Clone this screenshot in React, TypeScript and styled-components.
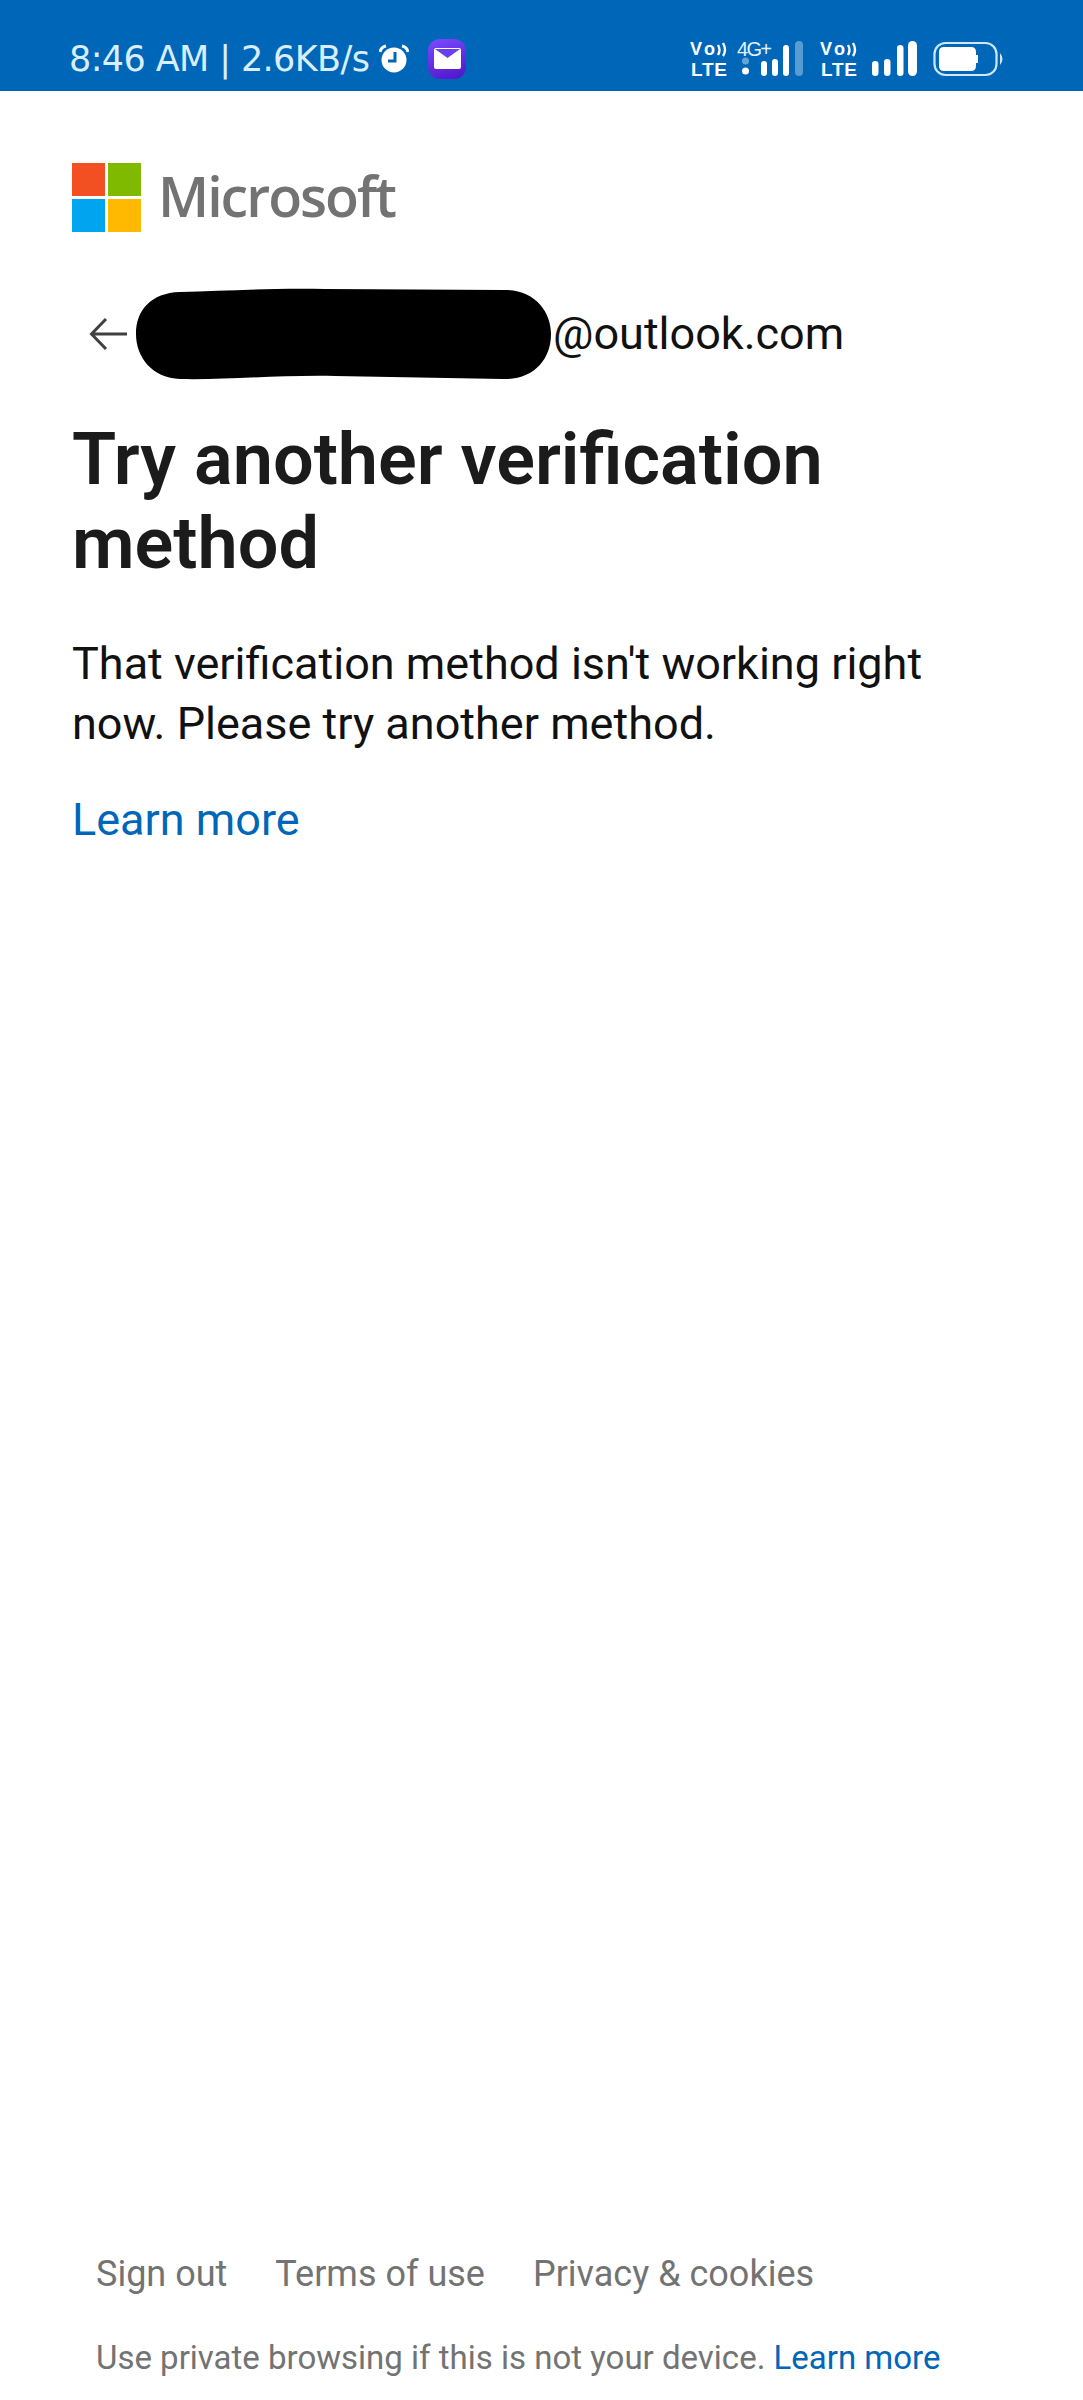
import styled, { createGlobalStyle } from "styled-components";

const GlobalStyle = createGlobalStyle`
  html, body {
    margin: 0;
    padding: 0;
    background: #fff;
  }
`;

const Page = styled.div`
  display: flex;
  flex-direction: column;
  width: 1083px;
  height: 2400px;
  overflow: hidden;
  font-family: Roboto, "Liberation Sans", sans-serif;
  color: #1b1b1b;
`;

const StatusBar = styled.div`
  display: flex;
  justify-content: space-between;
  align-items: center;
  height: 91px;
  padding: 26px 78px 0 69px;
  box-sizing: border-box;
  background: #0067b8;
  flex-shrink: 0;
`;

const StatusLeft = styled.div`
  display: flex;
  align-items: center;
`;

const StatusRight = styled.div`
  display: flex;
  align-items: center;
`;

const StatusIcon = styled.svg<{ $left?: number }>`
  margin-left: ${(p) => p.$left ?? 0}px;
  flex-shrink: 0;
`;

const StatusText = styled.span`
  font-family: "DejaVu Sans", sans-serif;
  font-size: 35px;
  line-height: 42px;
  color: #d9eeff;
  letter-spacing: -0.6px;
  white-space: nowrap;
  width: 310px;
`;

const AppBadge = styled.div`
  display: flex;
  align-items: center;
  justify-content: center;
  width: 38px;
  height: 40px;
  margin-left: 19px;
  border-radius: 12px;
  background: linear-gradient(160deg, #7a4cff, #4e14c8);
`;

const Main = styled.main`
  display: flex;
  flex-direction: column;
  padding: 72px 72px 0;
`;

const Brand = styled.div`
  display: flex;
  align-items: center;
  gap: 17px;
  height: 69px;
`;

const LogoGrid = styled.div`
  display: grid;
  grid-template-columns: 33px 33px;
  grid-template-rows: 33px 33px;
  gap: 3px;
`;

const LogoTile = styled.div<{ $color: string }>`
  background: ${(p) => p.$color};
`;

const BrandName = styled.span`
  font-family: "Open Sans", sans-serif;
  font-size: 55.5px;
  font-weight: 600;
  letter-spacing: -2px;
  line-height: 65px;
  padding-bottom: 4px;
  color: #737373;
`;

const Identity = styled.div`
  display: flex;
  align-items: center;
  height: 92px;
  margin-top: 56px;
  padding-left: 17px;
`;

const BackIcon = styled.svg`
  width: 40px;
  height: 34px;
  margin-right: 7px;
  flex-shrink: 0;
`;

const Redaction = styled.svg`
  width: 417px;
  height: 92px;
  flex-shrink: 0;
  margin-left: -1px;
`;

const Email = styled.span`
  font-size: 45px;
  line-height: 60px;
  margin-left: 1px;
  color: #111;
`;

const Title = styled.h1`
  margin: 38px 0 0;
  font-size: 72px;
  line-height: 84px;
  font-weight: 600;
  color: #1b1b1b;
  width: 880px;
`;

const Message = styled.p`
  margin: 48px 0 0;
  font-size: 45px;
  line-height: 60px;
  width: 920px;
  color: #111;
`;

const MoreLink = styled.a`
  display: block;
  margin-top: 36px;
  font-size: 45px;
  line-height: 60px;
  color: #0067b8;
`;

const Footer = styled.footer`
  display: flex;
  flex-direction: column;
  margin-top: auto;
  padding: 0 0 20px 96px;
`;

const FooterLinks = styled.div`
  display: flex;
  gap: 48px;
`;

const FooterLink = styled.span`
  font-size: 36px;
  line-height: 50px;
  color: #737373;
`;

const Notice = styled.div`
  margin-top: 37px;
  font-size: 33px;
  line-height: 44px;
  color: #737373;
  white-space: nowrap;
`;

const NoticeLink = styled.span`
  color: #0067b8;
`;

const VoLte = ({ left }: { left?: number }) => (
  <StatusIcon $left={left} width="38" height="42" viewBox="0 0 38 42">
    <text x="0" y="17" fontFamily="Liberation Sans" fontWeight="700" fontSize="18" textLength="25" fill="#fff">Vo</text>
    <path d="M28 7q3 5 0 10M33 5q4 7 0 13" stroke="#fff" strokeWidth="2.4" fill="none" />
    <text x="1" y="38" fontFamily="Liberation Sans" fontWeight="700" fontSize="19" textLength="36" fill="#fff">LTE</text>
  </StatusIcon>
);

const App = () => {
  return (
    <>
      <GlobalStyle />
      <Page>
        <StatusBar>
          <StatusLeft>
            <StatusText>8:46 AM | 2.6KB/s</StatusText>
            <StatusIcon width="30" height="30" viewBox="0 0 30 30">
              <circle cx="15" cy="16" r="12.5" fill="#fff" />
              <path d="M16 8v9h-7" stroke="#0067b8" strokeWidth="3" fill="none" />
              <path d="M1 8q1-5 6-6M29 8q-1-5-6-6" stroke="#fff" strokeWidth="3" fill="none" />
            </StatusIcon>
            <AppBadge>
              <svg width="27" height="21" viewBox="0 0 27 21">
                <rect width="27" height="21" rx="2" fill="#fff" />
                <path d="M1 1h25l-12.5 9z" fill="#6a3df0" />
              </svg>
            </AppBadge>
          </StatusLeft>
          <StatusRight>
            <VoLte />
            <StatusIcon $left={9} width="67" height="42" viewBox="0 0 67 42">
              <text x="0" y="18" fontFamily="Liberation Sans" fontSize="20" textLength="35" fill="#e6f2fc">4G+</text>
              <circle cx="8.5" cy="23" r="3.5" fill="#fff" opacity="0.4" />
              <circle cx="8.5" cy="33" r="3.5" fill="#fff" />
              <rect x="24" y="23" width="6" height="15" rx="3" fill="#fff" />
              <rect x="35" y="21" width="6" height="17" rx="3" fill="#fff" />
              <rect x="46" y="7" width="6" height="31" rx="3" fill="#fff" />
              <rect x="58" y="3" width="8" height="35" rx="4" fill="#fff" opacity="0.35" />
            </StatusIcon>
            <VoLte left={16} />
            <StatusIcon $left={14} width="46" height="42" viewBox="0 0 46 42">
              <rect x="0" y="23" width="6.5" height="15" rx="3.2" fill="#fff" />
              <rect x="12" y="21" width="6.5" height="17" rx="3.2" fill="#fff" />
              <rect x="25" y="7" width="6.5" height="31" rx="3.2" fill="#fff" />
              <rect x="36" y="3" width="9" height="35" rx="4.5" fill="#fff" />
            </StatusIcon>
            <StatusIcon $left={15} width="72" height="36" viewBox="0 0 72 36">
              <rect x="1.5" y="2" width="62" height="32" rx="11" fill="none" stroke="#cfe6fb" strokeWidth="2.2" />
              <path d="M11 6h27q5 0 5 5v3h2v8h-2v3q0 5-5 5H11q-5 0-5-5V11q0-5 5-5z" fill="#fff" />
              <path d="M67 12q5 6 0 12z" fill="#cfe6fb" />
            </StatusIcon>
          </StatusRight>
        </StatusBar>
        <Main>
          <Brand>
            <LogoGrid>
              <LogoTile $color="#f25022" />
              <LogoTile $color="#7fba00" />
              <LogoTile $color="#00a4ef" />
              <LogoTile $color="#ffb900" />
            </LogoGrid>
            <BrandName>Microsoft</BrandName>
          </Brand>
          <Identity>
            <BackIcon viewBox="0 0 40 34">
              <path d="M38 17H3M17 2 2.5 17 17 32" fill="none" stroke="#404040" strokeWidth="3" />
            </BackIcon>
            <Redaction viewBox="0 0 417 92">
              <path
                d="M45 4 C90 3 130 0 190 1 L370 2 C400 2 416 24 416 46 C416 72 398 92 368 91 L200 88 C140 87 90 92 45 91 C18 90 1 70 1 46 C1 22 16 5 45 4 Z"
                fill="#000"
              />
            </Redaction>
            <Email>@outlook.com</Email>
          </Identity>
          <Title>Try another verification method</Title>
          <Message>That verification method isn't working right now. Please try another method.</Message>
          <MoreLink>Learn more</MoreLink>
        </Main>
        <Footer>
          <FooterLinks>
            <FooterLink>Sign out</FooterLink>
            <FooterLink>Terms of use</FooterLink>
            <FooterLink>Privacy &amp; cookies</FooterLink>
          </FooterLinks>
          <Notice>
            Use private browsing if this is not your device. <NoticeLink>Learn more</NoticeLink>
          </Notice>
        </Footer>
      </Page>
    </>
  );
};

export default App;
